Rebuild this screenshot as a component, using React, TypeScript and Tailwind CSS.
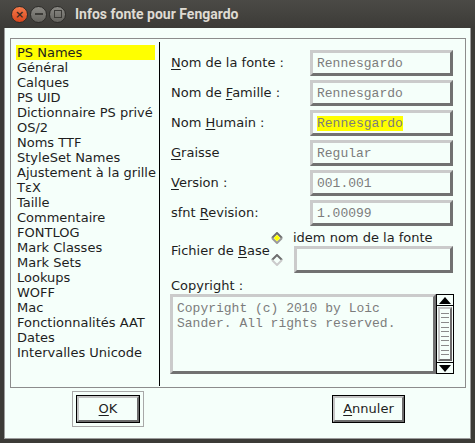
import React from 'react';

const items = [
  'PS Names', 'Général', 'Calques', 'PS UID', 'Dictionnaire PS privé', 'OS/2', 'Noms TTF',
  'StyleSet Names', 'Ajustement à la grille', 'TεX', 'Taille', 'Commentaire', 'FONTLOG',
  'Mark Classes', 'Mark Sets', 'Lookups', 'WOFF', 'Mac', 'Fonctionnalités AAT', 'Dates',
  'Intervalles Unicode',
];

const bevel =
  'border-[3px] border-t-[#cbcbcb] border-l-[#cbcbcb] border-r-[#717171] border-b-[#717171] bg-[#f5fffa]';

const Label = ({ pre, u, post }: { pre?: string; u?: string; post?: string }) => (
  <span className="w-[140px] pl-px text-[13px] text-[#1e1e1e] whitespace-nowrap">
    {pre}
    {u && <span className="underline underline-offset-2">{u}</span>}
    {post}
  </span>
);

const FieldRow = ({
  pre,
  u,
  post,
  value,
  hl,
}: {
  pre?: string;
  u?: string;
  post?: string;
  value: string;
  hl?: boolean;
}) => (
  <div className="flex items-center h-[26px]">
    <Label pre={pre} u={u} post={post} />
    <div className={`w-[143px] h-[26px] flex items-center pl-[4px] ${bevel}`}>
      <span
        className={`text-[13px] leading-[15px] text-[#7c7c7c] ${hl ? 'bg-[#ffff00] text-[#5c5c2a]' : ''}`}
        style={{ fontFamily: '"Liberation Mono", monospace' }}
      >
        {value}
      </span>
    </div>
  </div>
);

const RadioOn = () => (
  <svg width="12" height="12" viewBox="0 0 12 12">
    <polyline points="1,6 6,1 11,6" fill="none" stroke="#6e6e6e" strokeWidth="2" />
    <polyline points="1,6 6,11 11,6" fill="none" stroke="#9a9a9a" strokeWidth="2" />
    <polygon points="6,2.8 9.2,6 6,9.2 2.8,6" fill="#ffff00" />
  </svg>
);

const RadioOff = () => (
  <svg width="12" height="12" viewBox="0 0 12 12">
    <polyline points="1,6 6,1 11,6" fill="none" stroke="#6e6e6e" strokeWidth="2" />
    <polyline points="1,6 6,11 11,6" fill="none" stroke="#cbcbcb" strokeWidth="2" />
  </svg>
);

const Button = ({ u, rest, w }: { u: string; rest: string; w: string }) => (
  <div className={`${w} h-[28px] border border-black`}>
    <div className="w-full h-full border-[2px] border-t-[#c4c4c4] border-l-[#c4c4c4] border-r-[#6c6c6c] border-b-[#6c6c6c] bg-[#f5fffa] flex items-center justify-center text-[13px] text-[#1e1e1e]">
      <span className="underline underline-offset-2">{u}</span>
      {rest}
    </div>
  </div>
);

export default function App() {
  return (
    <div
      className="w-[475px] h-[443px] bg-[#3c3b37] flex flex-col"
      style={{ fontFamily: '"DejaVu Sans", sans-serif' }}
    >
      {/* title bar */}
      <div className="h-[28px] shrink-0 flex items-center bg-gradient-to-b from-[#4b4a46] to-[#3c3b37]">
        <div className="flex items-center gap-[2px] ml-[11px]">
          <div className="w-[17px] h-[17px] rounded-full bg-gradient-to-b from-[#f47a4a] to-[#d9461c] border border-[#2e2d2a] flex items-center justify-center text-[11px] leading-none font-bold text-[#3a2a22]">
            ×
          </div>
          <div className="w-[17px] h-[17px] rounded-full bg-gradient-to-b from-[#8a8984] to-[#65645f] border border-[#2e2d2a] flex items-center justify-center">
            <div className="w-[8px] h-[2px] bg-[#3c3b37]" />
          </div>
          <div className="w-[17px] h-[17px] rounded-full bg-gradient-to-b from-[#8a8984] to-[#65645f] border border-[#2e2d2a] flex items-center justify-center">
            <div className="w-[8px] h-[8px] border-[1.5px] border-[#3c3b37]" />
          </div>
        </div>
        <span
          className="ml-[9px] text-[14px] font-bold text-[#dfdbd2]"
          style={{ fontFamily: 'Roboto, sans-serif' }}
        >
          Infos fonte pour Fengardo
        </span>
      </div>

      {/* body */}
      <div className="flex-1 mx-[4px] mb-[4px] bg-[#f5fffa] border border-t-0 border-[#9c9c9c] flex flex-col pl-[5px] pr-[4px] pt-[10px]">
        <div className="h-[350px] border border-[#8c8c8c] flex">
          {/* list */}
          <div className="w-[148px] pl-[5px] pt-[6px] flex flex-col">
            {items.map((it, i) => (
              <div
                key={it}
                className={`w-[139px] h-[15px] leading-[15px] pl-px text-[13px] text-[#1e1e1e] whitespace-nowrap ${
                  i === 0 ? 'bg-[#ffff00]' : ''
                }`}
              >
                {it}
              </div>
            ))}
          </div>
          <div className="w-px bg-black mt-[3px] mb-px" />

          {/* form */}
          <div className="flex-1 pl-[10px] pt-[11px] flex flex-col">
            <div className="flex flex-col gap-[4px]">
              <FieldRow u="N" post="om de la fonte :" value="Rennesgardo" />
              <FieldRow pre="Nom de " u="F" post="amille :" value="Rennesgardo" />
              <FieldRow pre="Nom " u="H" post="umain :" value="Rennesgardo" hl />
              <FieldRow u="G" post="raisse" value="Regular" />
              <FieldRow u="V" post="ersion :" value="001.001" />
              <FieldRow pre="sfnt " u="R" post="evision:" value="1.00099" />
            </div>

            <div className="flex mt-[3px] h-[44px]">
              <div className="w-[101px] flex items-center">
                <span className="pl-px text-[13px] text-[#1e1e1e] whitespace-nowrap">
                  Fichier de <span className="underline underline-offset-2">B</span>ase
                </span>
              </div>
              <div className="w-[12px] flex flex-col pt-[3px] gap-[10px]">
                <RadioOn />
                <RadioOff />
              </div>
              <div className="ml-[10px] flex flex-col">
                <span className="h-[16px] leading-[16px] mt-px text-[13px] text-[#1e1e1e] whitespace-nowrap">
                  idem nom de la fonte
                </span>
                <div className={`ml-px w-[159px] h-[27px] ${bevel}`} />
              </div>
            </div>

            <span className="mt-[5px] h-[15px] leading-[15px] pl-px text-[13px] text-[#1e1e1e]">
              Copyright :
            </span>
            <div className="mt-px flex h-[80px]">
              <div
                className={`w-[266px] h-[80px] pl-[4px] pt-[4px] text-[13px] leading-[15px] text-[#7c7c7c] ${bevel}`}
                style={{ fontFamily: '"Liberation Mono", monospace' }}
              >
                Copyright (c) 2010 by Loic
                <br />
                Sander. All rights reserved.
              </div>
              <div className="w-[18px] h-[80px] border border-black flex flex-col bg-[#f5fffa]">
                <div className="h-[11px] border-b border-black flex items-center justify-center">
                  <svg width="12" height="7" viewBox="0 0 12 7">
                    <polygon points="6,0 12,7 0,7" fill="#000" />
                  </svg>
                </div>
                <div className="flex-1 mx-px my-px border-[2px] border-t-[#c4c4c4] border-l-[#c4c4c4] border-r-[#6c6c6c] border-b-[#6c6c6c] flex flex-col justify-evenly px-px">
                  {Array.from({ length: 10 }).map((_, i) => (
                    <div key={i} className="h-px bg-[#8a8a8a]" />
                  ))}
                </div>
                <div className="h-[11px] border-t border-black flex items-center justify-center">
                  <svg width="12" height="7" viewBox="0 0 12 7">
                    <polygon points="0,0 12,0 6,7" fill="#000" />
                  </svg>
                </div>
              </div>
            </div>
          </div>
        </div>

        {/* buttons */}
        <div className="flex items-start pt-[3px]">
          <div className="ml-[62px] w-[72px] h-[36px] border border-[#a8a8a8] flex items-center justify-center">
            <Button u="O" rest="K" w="w-[64px]" />
          </div>
          <div className="ml-[188px] mt-[4px]">
            <Button u="A" rest="nnuler" w="w-[73px]" />
          </div>
        </div>
      </div>
    </div>
  );
}
